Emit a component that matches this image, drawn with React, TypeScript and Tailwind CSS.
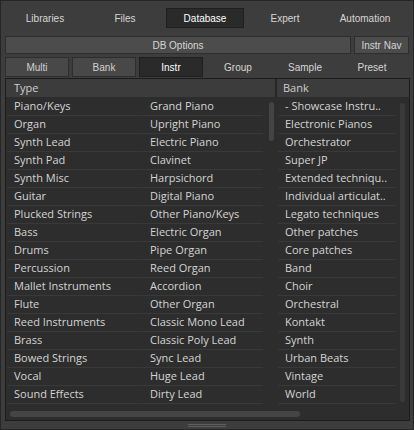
const tabs = ["Libraries", "Files", "Database", "Expert", "Automation"];
const modes = ["Multi", "Bank", "Instr", "Group", "Sample", "Preset"];

const types = [
  "Piano/Keys",
  "Organ",
  "Synth Lead",
  "Synth Pad",
  "Synth Misc",
  "Guitar",
  "Plucked Strings",
  "Bass",
  "Drums",
  "Percussion",
  "Mallet Instruments",
  "Flute",
  "Reed Instruments",
  "Brass",
  "Bowed Strings",
  "Vocal",
  "Sound Effects",
];

const subTypes = [
  "Grand Piano",
  "Upright Piano",
  "Electric Piano",
  "Clavinet",
  "Harpsichord",
  "Digital Piano",
  "Other Piano/Keys",
  "Electric Organ",
  "Pipe Organ",
  "Reed Organ",
  "Accordion",
  "Other Organ",
  "Classic Mono Lead",
  "Classic Poly Lead",
  "Sync Lead",
  "Huge Lead",
  "Dirty Lead",
];

const banks = [
  "- Showcase Instru..",
  "Electronic Pianos",
  "Orchestrator",
  "Super JP",
  "Extended techniqu..",
  "Individual articulat..",
  "Legato techniques",
  "Other patches",
  "Core patches",
  "Band",
  "Choir",
  "Orchestral",
  "Kontakt",
  "Synth",
  "Urban Beats",
  "Vintage",
  "World",
];

const uiFont = "font-['Liberation_Sans',Arial,sans-serif]";
const listFont = "font-['Open_Sans','DejaVu_Sans',sans-serif]";

const ListColumn = ({ items, width }: { items: string[]; width: string }) => (
  <div className={`flex flex-col ${width}`}>
    {items.map((item) => (
      <div
        key={item}
        className="h-[18px] border-b border-[#393939] pl-[7px] flex items-center text-[11px] text-[#d4d4d4] whitespace-nowrap overflow-hidden"
      >
        {item}
      </div>
    ))}
  </div>
);

const App = () => {
  return (
    <div className={`w-[414px] h-[430px] bg-[#3d3d3d] border border-[#262626] flex flex-col ${uiFont}`}>
      {/* Top tabs */}
      <div className="pt-[7px] pl-[4px] grid grid-cols-5 w-[404px] h-[27px]">
        {tabs.map((tab) => (
          <div
            key={tab}
            className={`mx-[1px] flex items-center justify-center text-[10px] ${
              tab === "Database"
                ? "bg-[#2a2a2a] border border-[#1f1f1f] text-white"
                : "text-[#d6d6d6]"
            }`}
          >
            {tab}
          </div>
        ))}
      </div>

      {/* DB options row */}
      <div className="mt-[8px] pl-[4px] flex gap-[3px] h-[18px]">
        <div className="w-[346px] bg-[#4c4c4c] border border-[#2e2e2e] flex items-center justify-center text-[10px] text-[#d6d6d6]">
          DB Options
        </div>
        <div className="w-[55px] bg-[#4c4c4c] border border-[#2e2e2e] flex items-center justify-center text-[10px] text-[#d6d6d6]">
          Instr Nav
        </div>
      </div>

      {/* Mode row */}
      <div className="mt-[3px] pl-[4px] flex gap-[3px] h-[20px]">
        {modes.map((mode, i) => (
          <div
            key={mode}
            className={`w-[64px] flex items-center justify-center text-[10px] ${
              mode === "Instr"
                ? "bg-[#2a2a2a] border border-[#1f1f1f] text-white"
                : i < 2
                ? "bg-[#484848] border border-[#2e2e2e] text-[#d0d0d0]"
                : "text-[#d6d6d6]"
            }`}
          >
            {mode}
          </div>
        ))}
      </div>

      {/* Browser panel */}
      <div className={`ml-[4px] mt-[1px] w-[405px] h-[343px] bg-[#2d2d2d] border border-[#1c1c1c] flex flex-col ${listFont}`}>
        <div className="flex h-[19px] border-b border-[#2d2d2d]">
          <div className="w-[269px] bg-[#3c3c3c] pl-[8px] flex items-center text-[11px] text-[#cfcfcf]">
            Type
          </div>
          <div className="w-[2px] bg-[#262626]" />
          <div className="flex-1 bg-[#3c3c3c] pl-[6px] flex items-center text-[11px] text-[#cfcfcf]">
            Bank
          </div>
        </div>

        <div className="flex">
          <div className="flex pl-[1px]">
            <ListColumn items={types} width="w-[135px]" />
            <div className="w-[1px]" />
            <ListColumn items={subTypes} width="w-[120px]" />
            <div className="w-[13px] flex justify-center pt-[4px] pl-[3px]">
              <div className="w-[5px] h-[39px] rounded-full bg-[#444444]" />
            </div>
          </div>
          <div className="w-[2px]" />
          <div className="flex flex-1">
            <ListColumn items={banks} width="w-[118px]" />
            <div className="flex-1 flex justify-center pt-[5px] pb-[2px]">
              <div className="w-[5px] rounded-full bg-[#3a3a3a]" />
            </div>
          </div>
        </div>

        <div className="pt-[7px] pl-[4px]">
          <div className="w-[290px] h-[6px] rounded-full bg-[#454545]" />
        </div>
      </div>

      {/* Bottom grip */}
      <div className="flex-1 flex flex-col items-center justify-center gap-[1px]">
        <div className="w-[38px] h-[1px] bg-[#5e5e5e]" />
        <div className="w-[38px] h-[1px] bg-[#5e5e5e]" />
      </div>
    </div>
  );
};

export default App;
